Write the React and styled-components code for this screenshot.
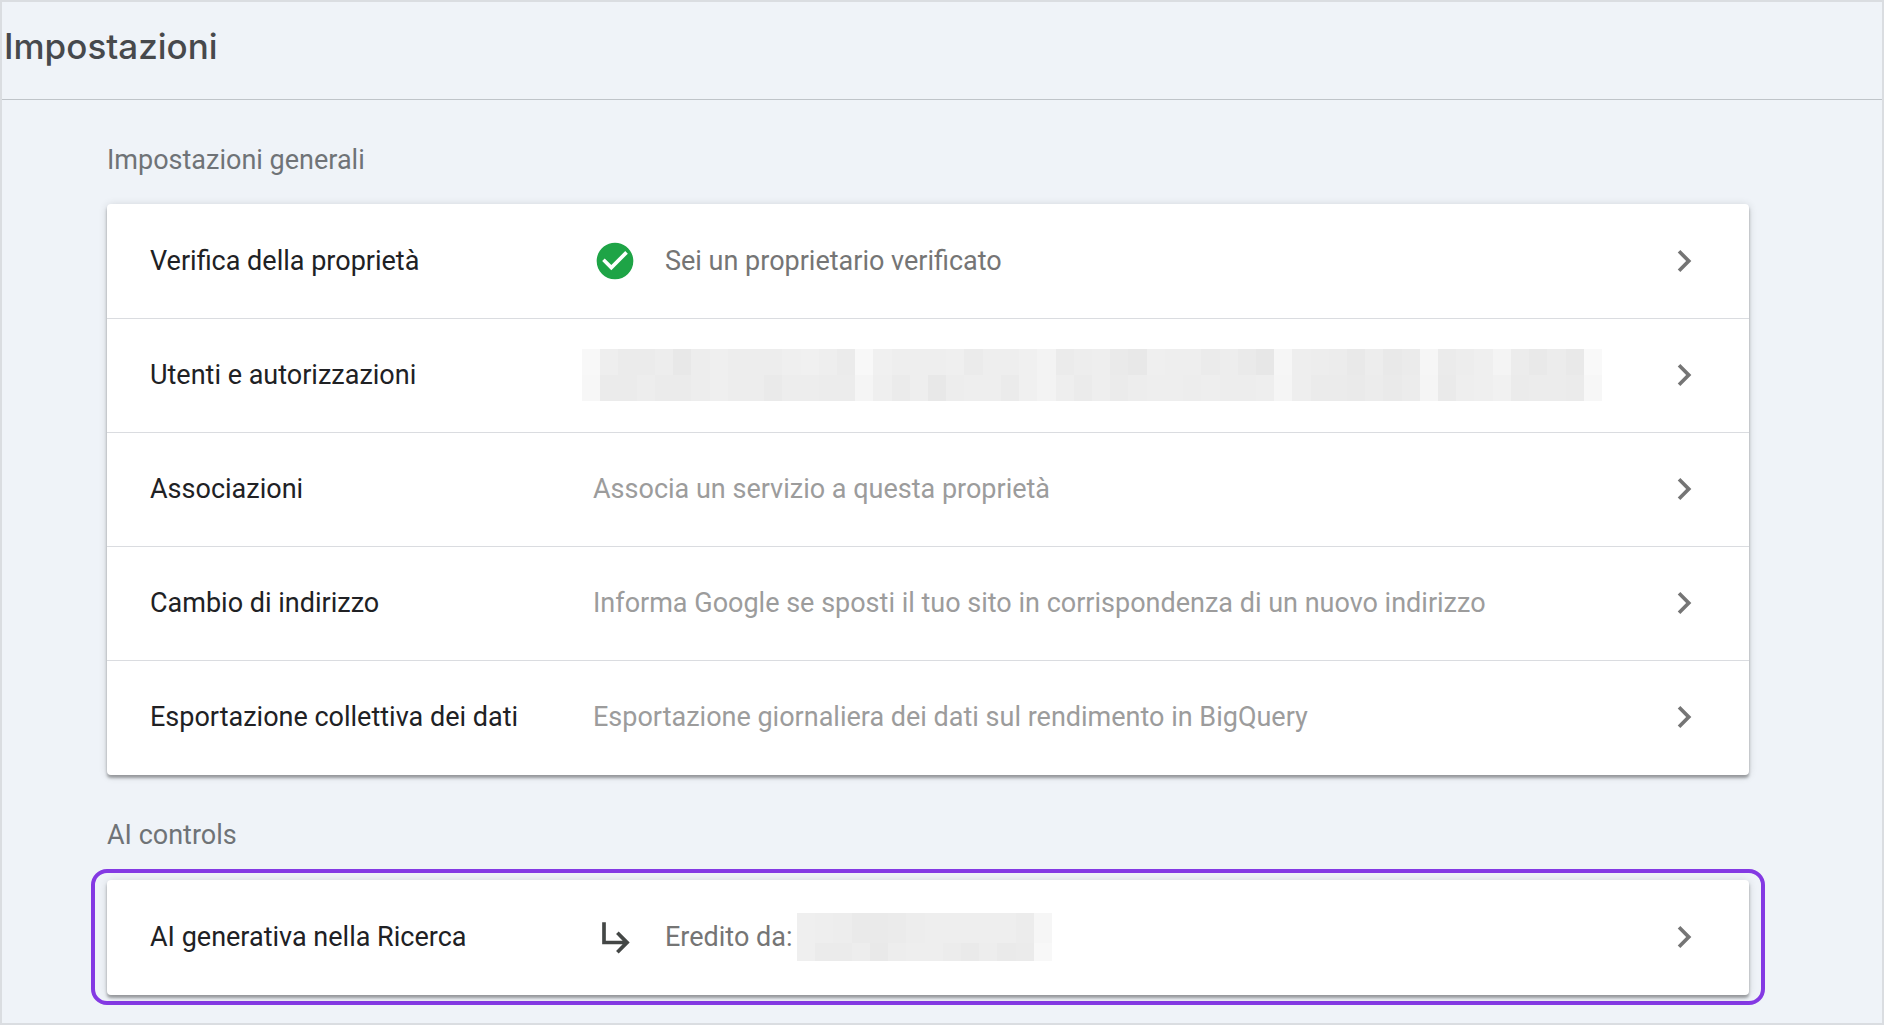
import React from 'react';
import styled, { createGlobalStyle } from 'styled-components';
import { MdCheckCircle, MdChevronRight } from 'react-icons/md';

const GlobalStyle = createGlobalStyle`
  * {
    box-sizing: border-box;
  }
  body {
    margin: 0;
    background: #eff3f8;
    font-family: Roboto, "Liberation Sans", sans-serif;
  }
`;

const Page = styled.div`
  min-height: 100vh;
  border: 2px solid #dadde1;
`;

const Header = styled.header`
  padding: 22px 2px 31px;
  border-bottom: 1px solid #bfc4c9;
`;

const Title = styled.h1`
  margin: 0;
  color: #47494c;
  font-family: "Google Sans", Inter, sans-serif;
  font-size: 35px;
  font-weight: 500;
  line-height: 44px;
`;

const Content = styled.main`
  padding: 0 133px 16px 105px;
`;

const SectionTitle = styled.h2`
  margin: 0;
  padding: 44px 0 28px;
  color: #6f7377;
  font-size: 27px;
  font-weight: 400;
  line-height: 32px;
`;

const AiSectionTitle = styled(SectionTitle)`
  padding-bottom: 18px;
`;

const Card = styled.ul`
  margin: 0;
  padding: 1px 0;
  list-style: none;
  background: #fff;
  border-radius: 4px;
  box-shadow: 0 3px 3px rgba(0, 0, 0, 0.32), 0 1px 9px rgba(0, 0, 0, 0.14);
`;

const Highlight = styled.div`
  margin: 0 -16px;
  padding: 7px 12px 6px;
  border: 4px solid #8439e3;
  border-radius: 16px;
`;

const Item = styled.li`
  & + & {
    border-top: 1px solid #dadce0;
  }
`;

const RowLink = styled.a`
  display: grid;
  grid-template-columns: 443px minmax(0, 1fr) 44px;
  align-items: center;
  min-height: 113px;
  padding: 0 43px 2px;
  color: #202124;
  font-size: 27px;
  line-height: 32px;
  text-decoration: none;
`;

const Value = styled.span`
  display: flex;
  align-items: center;
  color: ${({ $muted }) => ($muted ? '#9c9c9c' : '#757575')};
`;

const ValueIcon = styled.span`
  display: flex;
  margin-right: 28px;
  color: ${({ $color }) => $color};
`;

const Chevron = styled(MdChevronRight)`
  color: #757575;
`;

const Redacted = styled.svg`
  flex: 0 1 auto;
  width: ${({ $width }) => $width}px;
  height: ${({ $height }) => $height}px;
  min-width: 0;
  margin-left: ${({ $shift }) => $shift}px;
`;

// One hex pair per block, left to right
const USERS_TOP =
  'f8eeebebede8edefedededeff0eeebf8f0eeeeeeefebeeeef0f3ebed' +
  'eeeae8efeeeeebedeae7f6eeedece9ede9ebf6ebedeff4ece9ece9f9';
const USERS_BOTTOM =
  'f7ebebedebebedefededeaededececf5efebeee8edeeeeebf0f3eeeb' +
  'eeebedeeeeedeeededeef5eeebebeaeceaecf5eaeeeff1ebececebf7';
const PARENT_TOP = 'efeeedeaeaebedeeeeeeeeeeecf6';
const PARENT_BOTTOM = 'efebebede9edeeeeeceaedeaebf8';

function Mosaic({ rows, split, width, height, shift, label }) {
  const columns = rows[0].length / 2;
  return (
    <Redacted
      $width={width}
      $height={height}
      $shift={shift}
      viewBox={`0 0 ${columns} ${height}`}
      preserveAspectRatio="none"
      shapeRendering="crispEdges"
      role="img"
      aria-label={label}
    >
      {rows.map((row, r) =>
        row.match(/../g).map((grey, i) => (
          <rect
            key={`${r}-${i}`}
            x={i}
            y={r === 0 ? 0 : split}
            width="1"
            height={r === 0 ? split : height - split}
            fill={`#${grey}${grey}${grey}`}
          />
        ))
      )}
    </Redacted>
  );
}

function InheritedIcon() {
  return (
    <svg width="44" height="44" viewBox="0 0 24 24" fill="currentColor" aria-hidden="true">
      <path d="M20 15l-6 6-1.42-1.42L16.17 16H5V4h2v10h9.17l-3.59-3.58L14 9l6 6z" />
    </svg>
  );
}

function Row({ label, muted, children }) {
  return (
    <Item>
      <RowLink href="#">
        <span>{label}</span>
        <Value $muted={muted}>{children}</Value>
        <Chevron size={44} aria-hidden="true" />
      </RowLink>
    </Item>
  );
}

export default function App() {
  return (
    <>
      <GlobalStyle />
      <Page>
        <Header>
          <Title>Impostazioni</Title>
        </Header>
        <Content>
          <section>
            <SectionTitle>Impostazioni generali</SectionTitle>
            <Card>
              <Row label="Verifica della proprietà">
                <ValueIcon $color="#1ea446">
                  <MdCheckCircle size={44} aria-hidden="true" />
                </ValueIcon>
                Sei un proprietario verificato
              </Row>
              <Row label="Utenti e autorizzazioni">
                <Mosaic
                  rows={[USERS_TOP, USERS_BOTTOM]}
                  split={26}
                  width={1020}
                  height={52}
                  shift={-11}
                  label="Utenti"
                />
              </Row>
              <Row label="Associazioni" muted>
                Associa un servizio a questa proprietà
              </Row>
              <Row label="Cambio di indirizzo" muted>
                Informa Google se sposti il tuo sito in corrispondenza di un nuovo indirizzo
              </Row>
              <Row label="Esportazione collettiva dei dati" muted>
                Esportazione giornaliera dei dati sul rendimento in BigQuery
              </Row>
            </Card>
          </section>
          <section>
            <AiSectionTitle>AI controls</AiSectionTitle>
            <Highlight>
              <Card>
                <Row label="AI generativa nella Ricerca">
                  <ValueIcon $color="#444746">
                    <InheritedIcon />
                  </ValueIcon>
                  Eredito da:
                  <Mosaic
                    rows={[PARENT_TOP, PARENT_BOTTOM]}
                    split={30}
                    width={255}
                    height={48}
                    shift={5}
                    label="Proprietà principale"
                  />
                </Row>
              </Card>
            </Highlight>
          </section>
        </Content>
      </Page>
    </>
  );
}
